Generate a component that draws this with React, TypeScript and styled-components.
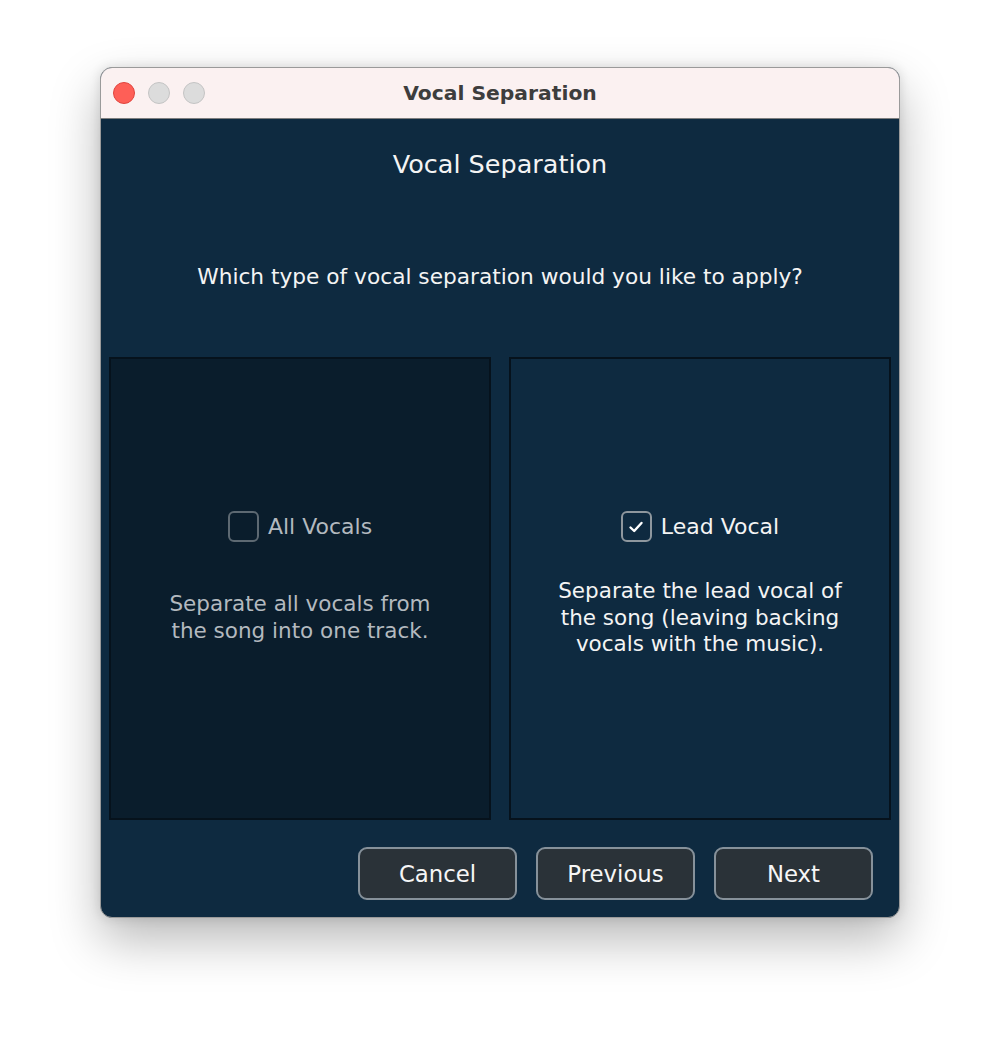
import React from "react";
import styled, { createGlobalStyle } from "styled-components";

const Global = createGlobalStyle`
  html, body { margin: 0; padding: 0; background: #ffffff; }
  body { font-family: "DejaVu Sans", "Open Sans", sans-serif; }
`;

const Page = styled.div`
  width: 1000px;
  height: 1050px;
  padding: 67px 100px 0;
  box-sizing: border-box;
`;

const Window = styled.div`
  width: 800px;
  height: 851px;
  border-radius: 12px;
  overflow: hidden;
  display: flex;
  flex-direction: column;
  background: #0e2a40;
  border: 1px solid #9a9a9a;
  box-sizing: border-box;
  box-shadow: 0 22px 50px rgba(0, 0, 0, 0.28), 0 0 12px rgba(0, 0, 0, 0.12);
`;

const TitleBar = styled.div`
  height: 50px;
  flex: none;
  background: #fbf1f1;
  border-bottom: 1px solid #7e7e7e;
  display: flex;
  align-items: center;
  position: relative;
  padding-left: 12px;
`;

const Lights = styled.div`
  display: flex;
  gap: 13px;
`;

const Light = styled.div<{ $c: string; $b: string }>`
  width: 22px;
  height: 22px;
  border-radius: 50%;
  background: ${(p) => p.$c};
  border: 1px solid ${(p) => p.$b};
  box-sizing: border-box;
`;

const WinTitle = styled.div`
  position: absolute;
  left: 0;
  right: 0;
  text-align: center;
  font-weight: bold;
  font-size: 20.3px;
  color: #3d3d3d;
  pointer-events: none;
`;

const Body = styled.div`
  flex: 1;
  display: flex;
  flex-direction: column;
  padding: 0 8px 0 8px;
`;

const Heading = styled.div`
  margin-top: 29px;
  text-align: center;
  color: #f4f4f4;
  font-size: 25.5px;
  line-height: 32px;
`;

const Question = styled.div`
  margin-top: 83px;
  text-align: center;
  color: #f4f4f4;
  font-size: 21.7px;
  line-height: 28px;
`;

const Panels = styled.div`
  margin-top: 66px;
  display: grid;
  grid-template-columns: 382px 382px;
  gap: 18px;
  height: 463px;
`;

const Panel = styled.div<{ $dark?: boolean }>`
  background: ${(p) => (p.$dark ? "#0a1d2c" : "#0e2a40")};
  border: 2px solid #06121c;
  box-sizing: border-box;
  display: flex;
  flex-direction: column;
  align-items: center;
  padding-top: 152px;
  color: ${(p) => (p.$dark ? "#b3b9bf" : "#f4f4f4")};
`;

const CheckRow = styled.div`
  display: flex;
  align-items: center;
  gap: 9px;
  font-size: 22px;
  height: 31px;
`;

const Box = styled.div<{ $dim?: boolean }>`
  width: 31px;
  height: 31px;
  border-radius: 6px;
  border: 2px solid ${(p) => (p.$dim ? "#5d6972" : "#8e979e")};
  box-sizing: border-box;
  display: flex;
  align-items: center;
  justify-content: center;
`;

const Desc = styled.div`
  height: 118px;
  margin-top: 17px;
  display: flex;
  align-items: center;
  justify-content: center;
  text-align: center;
  font-size: 21.5px;
  line-height: 26.6px;
  width: 292px;
`;

const Footer = styled.div`
  display: flex;
  justify-content: flex-end;
  gap: 19px;
  margin-top: 27px;
  padding-right: 18px;
`;

const Button = styled.button`
  width: 159px;
  height: 53px;
  border-radius: 9px;
  background: #2a3238;
  border: 2px solid #86919a;
  color: #f6f6f6;
  font-family: inherit;
  font-size: 22.8px;
  cursor: pointer;
`;

export default function App() {
  return (
    <>
      <Global />
      <Page>
        <Window>
          <TitleBar>
            <Lights>
              <Light $c="#fe5f57" $b="#e0443e" />
              <Light $c="#dcdcdc" $b="#c4c4c4" />
              <Light $c="#dcdcdc" $b="#c4c4c4" />
            </Lights>
            <WinTitle>Vocal Separation</WinTitle>
          </TitleBar>
          <Body>
            <Heading>Vocal Separation</Heading>
            <Question>Which type of vocal separation would you like to apply?</Question>
            <Panels>
              <Panel $dark>
                <CheckRow>
                  <Box $dim />
                  All Vocals
                </CheckRow>
                <Desc>Separate all vocals from the song into one track.</Desc>
              </Panel>
              <Panel>
                <CheckRow>
                  <Box>
                    <svg width="16" height="14" viewBox="0 0 16 14">
                      <path d="M2.5 7.5 L6.2 11 L13.5 3" fill="none" stroke="#ffffff" strokeWidth="2.4" strokeLinecap="round" strokeLinejoin="round" />
                    </svg>
                  </Box>
                  Lead Vocal
                </CheckRow>
                <Desc>Separate the lead vocal of the song (leaving backing vocals with the music).</Desc>
              </Panel>
            </Panels>
            <Footer>
              <Button>Cancel</Button>
              <Button>Previous</Button>
              <Button>Next</Button>
            </Footer>
          </Body>
        </Window>
      </Page>
    </>
  );
}
